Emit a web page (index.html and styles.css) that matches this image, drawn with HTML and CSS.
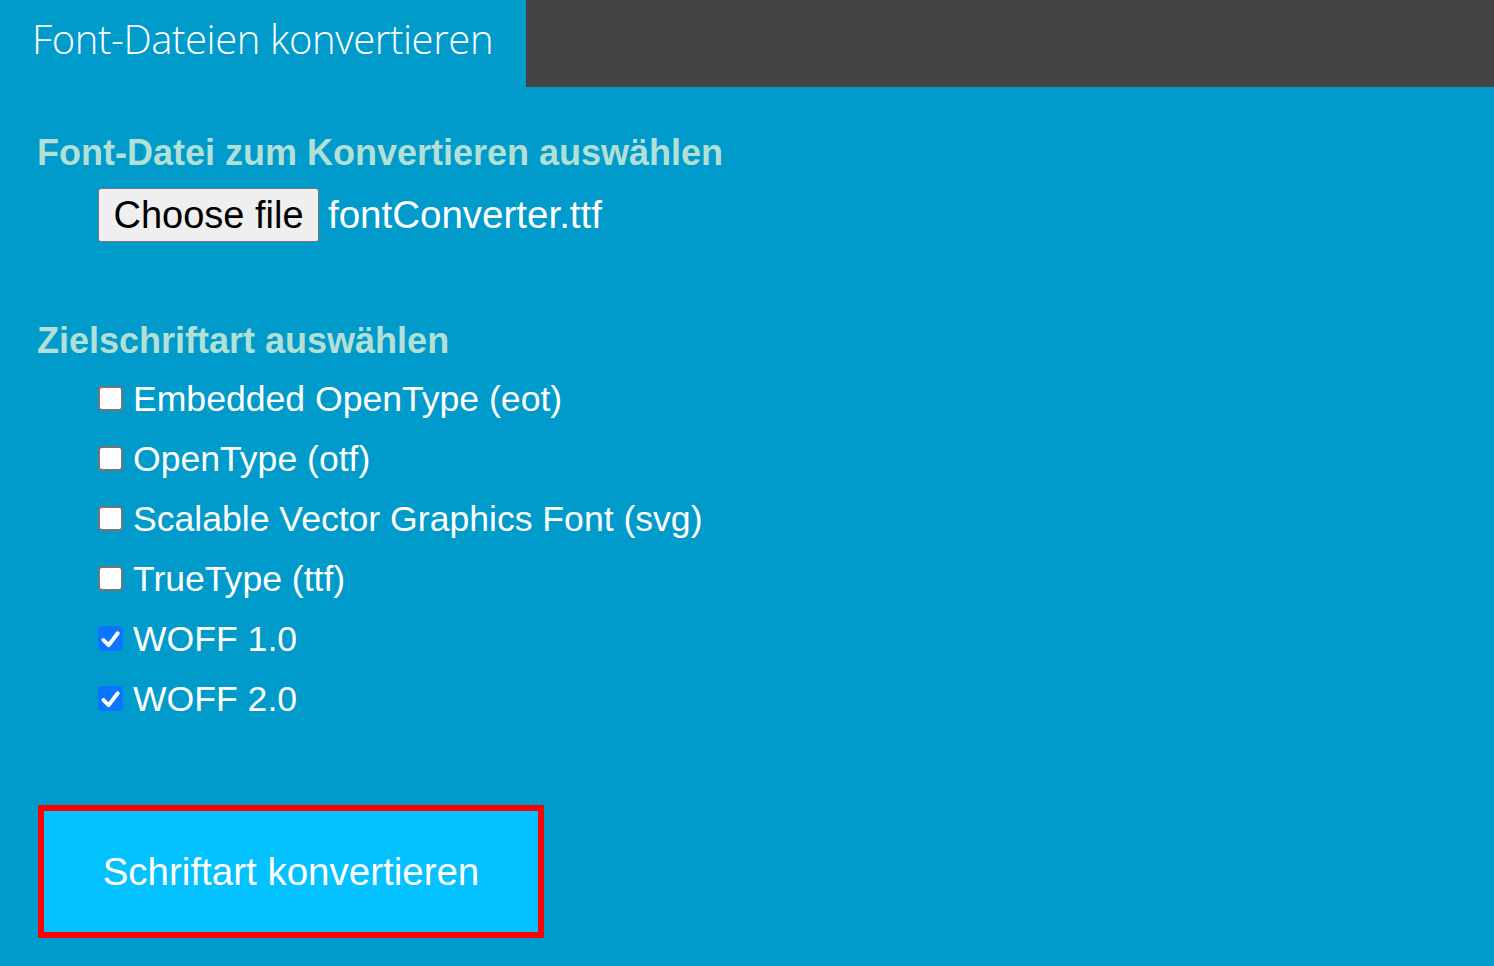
FILE: index.html
```html
<!DOCTYPE html>
<html lang="de">
<head>
<meta charset="utf-8">
<title>Font-Dateien konvertieren</title>
<link rel="stylesheet" href="styles.css">
</head>
<body>
<header class="topbar">
  <div class="tab"><h1 class="title">Font-Dateien konvertieren</h1></div>
  <div class="topbar-fill"></div>
</header>
<main class="content">
  <section class="group">
    <h2 class="group-title">Font-Datei zum Konvertieren auswählen</h2>
    <div class="file-row">
      <span class="file-btn">Choose file</span>
      <span class="file-name">fontConverter.ttf</span>
    </div>
  </section>
  <section class="group group-targets">
    <h2 class="group-title">Zielschriftart auswählen</h2>
    <ul class="options">
      <li class="option"><span class="box"></span><span class="label">Embedded OpenType (eot)</span></li>
      <li class="option"><span class="box"></span><span class="label">OpenType (otf)</span></li>
      <li class="option"><span class="box"></span><span class="label">Scalable Vector Graphics Font (svg)</span></li>
      <li class="option"><span class="box"></span><span class="label">TrueType (ttf)</span></li>
      <li class="option"><span class="box checked"><svg viewBox="0 0 26 26" class="check"><path d="M5.5 14.5 L11 20 L20.5 7.5" fill="none" stroke="#fff" stroke-width="4" stroke-linecap="round" stroke-linejoin="round"/></svg></span><span class="label">WOFF 1.0</span></li>
      <li class="option"><span class="box checked"><svg viewBox="0 0 26 26" class="check"><path d="M5.5 14.5 L11 20 L20.5 7.5" fill="none" stroke="#fff" stroke-width="4" stroke-linecap="round" stroke-linejoin="round"/></svg></span><span class="label">WOFF 2.0</span></li>
    </ul>
  </section>
  <div class="actions">
    <button class="convert" type="button">Schriftart konvertieren</button>
  </div>
</main>
</body>
</html>
```

FILE: styles.css
```css
html, body {
  margin: 0;
  padding: 0;
}
body {
  background: #009bcb;
  font-family: "Liberation Sans", Arial, sans-serif;
  color: #fff;
  min-height: 966px;
}
.topbar {
  display: flex;
  height: 87px;
}
.tab {
  width: 526px;
  background: #009bcb;
}
.title {
  margin: 0;
  padding: 14px 0 0 32px;
  font-family: "Open Sans", sans-serif;
  font-weight: 300;
  font-size: 40px;
  line-height: 50px;
  color: #fff;
  letter-spacing: -0.4px;
}
.topbar-fill {
  flex: 1;
  background: #444444;
}
.content {
  padding: 0 37px;
}
.group-title {
  margin: 0;
  font-size: 36px;
  line-height: 40px;
  font-weight: 700;
  color: #b3e0d6;
}
.group:first-child .group-title {
  padding-top: 46px;
}
.file-row {
  display: flex;
  align-items: center;
  gap: 9px;
  margin: 15px 0 0 61px;
}
.file-btn {
  box-sizing: border-box;
  display: inline-flex;
  align-items: center;
  justify-content: center;
  width: 221px;
  height: 54px;
  background: #efefef;
  border: 1px solid #767676;
  border-radius: 3px;
  color: #000;
  font-size: 38px;
  padding-top: 1px;
}
.file-name {
  font-size: 38.5px;
  color: #fff;
}
.group-targets {
  margin-top: 79px;
}
.options {
  list-style: none;
  margin: 8px 0 0 61px;
  padding: 0;
}
.option {
  display: flex;
  align-items: center;
  height: 60px;
  gap: 10px;
}
.box {
  box-sizing: border-box;
  width: 25px;
  height: 25px;
  border: 2px solid #767676;
  border-radius: 4px;
  background: #fff;
  display: flex;
  align-items: center;
  justify-content: center;
  margin-top: -2px;
}
.box.checked {
  border: none;
  background: #0b75ff;
}
.check {
  width: 25px;
  height: 25px;
}
.label {
  font-size: 35.6px;
  line-height: 40px;
}
.actions {
  margin-top: 76px;
}
.convert {
  box-sizing: border-box;
  width: 506px;
  height: 133px;
  background: #04c1ff;
  border: 6px solid #ff0000;
  color: #fff;
  font-family: "Liberation Sans", Arial, sans-serif;
  font-size: 38.5px;
  padding: 0;
  cursor: pointer;
  margin-left: 1px;
}
```
